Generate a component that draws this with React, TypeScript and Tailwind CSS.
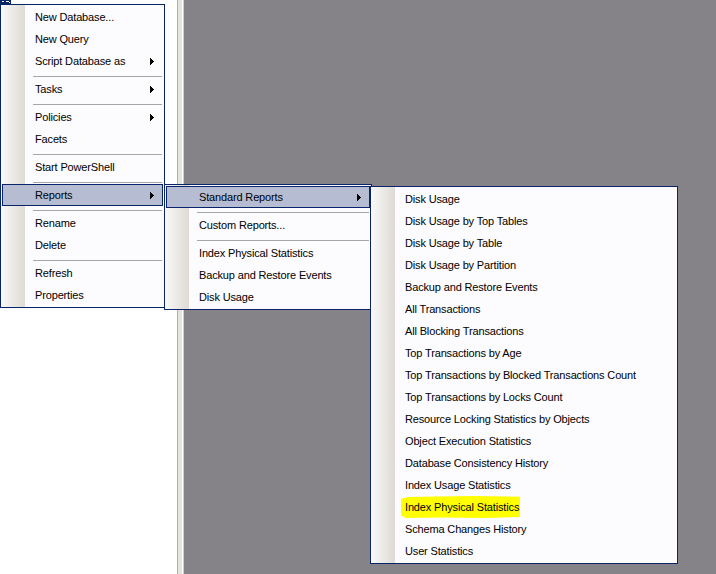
import React from "react";

type Entry =
  | { sep: true }
  | { label: string; arrow?: boolean; active?: boolean; marker?: boolean; sep?: false };

const Arrow = () => (
  <svg
    width="4"
    height="7"
    viewBox="0 0 4 7"
    shapeRendering="crispEdges"
    className="absolute right-[8px] top-[7px]"
  >
    <rect x="0" y="0" width="1" height="7" fill="#000" />
    <rect x="1" y="1" width="1" height="5" fill="#000" />
    <rect x="2" y="2" width="1" height="3" fill="#000" />
    <rect x="3" y="3" width="1" height="1" fill="#000" />
  </svg>
);

function Menu({ entries, className }: { entries: Entry[]; className: string }) {
  return (
    <div
      className={`absolute flex flex-col border border-[#0a246a] p-px bg-[linear-gradient(to_right,#f9f9f9,#dedad4_24px,#fcfbfe_24px)] ${className}`}
    >
      {entries.map((e, i) =>
        e.sep ? (
          <div key={i} className="h-[6px] pl-[31px] pr-px pt-[4px]">
            <div className="h-px bg-[#a8a7a6]" />
          </div>
        ) : (
          <div
            key={i}
            className={`relative flex h-[22px] items-center border pl-[32px] ${
              e.active ? "border-[#0a246a] bg-[#b6bdd2]" : "border-transparent"
            }`}
          >
            {e.marker ? (
              <span className="-ml-[4px] flex h-[22px] items-center bg-[#ffff00] pl-[4px] pr-px [clip-path:polygon(0_12%,6%_4%,30%_2%,60%_0,100%_3%,100%_95%,70%_100%,35%_98%,4%_100%,0_88%)]">
                {e.label}
              </span>
            ) : (
              <span>{e.label}</span>
            )}
            {e.arrow && <Arrow />}
          </div>
        )
      )}
    </div>
  );
}

const menu1: Entry[] = [
  { label: "New Database..." },
  { label: "New Query" },
  { label: "Script Database as", arrow: true },
  { sep: true },
  { label: "Tasks", arrow: true },
  { sep: true },
  { label: "Policies", arrow: true },
  { label: "Facets" },
  { sep: true },
  { label: "Start PowerShell" },
  { sep: true },
  { label: "Reports", arrow: true, active: true },
  { sep: true },
  { label: "Rename" },
  { label: "Delete" },
  { sep: true },
  { label: "Refresh" },
  { label: "Properties" },
];

const menu2: Entry[] = [
  { label: "Standard Reports", arrow: true, active: true },
  { sep: true },
  { label: "Custom Reports..." },
  { sep: true },
  { label: "Index Physical Statistics" },
  { label: "Backup and Restore Events" },
  { label: "Disk Usage" },
];

const menu3: Entry[] = [
  { label: "Disk Usage" },
  { label: "Disk Usage by Top Tables" },
  { label: "Disk Usage by Table" },
  { label: "Disk Usage by Partition" },
  { label: "Backup and Restore Events" },
  { label: "All Transactions" },
  { label: "All Blocking Transactions" },
  { label: "Top Transactions by Age" },
  { label: "Top Transactions by Blocked Transactions Count" },
  { label: "Top Transactions by Locks Count" },
  { label: "Resource Locking Statistics by Objects" },
  { label: "Object Execution Statistics" },
  { label: "Database Consistency History" },
  { label: "Index Usage Statistics" },
  { label: "Index Physical Statistics", marker: true },
  { label: "Schema Changes History" },
  { label: "User Statistics" },
];

export default function App() {
  return (
    <div className="relative h-[574px] w-[716px] overflow-hidden font-['Liberation_Sans',Arial,sans-serif] text-[11px] tracking-[-0.15px] text-black">
      <div className="flex h-full">
        <div className="w-[177px] bg-white" />
        <div className="w-px bg-[#b0aeac]" />
        <div className="w-[4px] bg-[#e8e2de]" />
        <div className="w-px bg-white" />
        <div className="w-px bg-[#d2ceca]" />
        <div className="flex-1 bg-[#858388]" />
      </div>

      <svg
        width="11"
        height="5"
        viewBox="0 0 11 5"
        shapeRendering="crispEdges"
        className="absolute left-0 top-0"
      >
        <rect x="0" y="0" width="11" height="5" fill="#0a246a" />
        <rect x="2" y="1" width="2" height="1" fill="#ffffff" />
        <rect x="6" y="1" width="3" height="1" fill="#ffffff" />
        <rect x="9" y="2" width="1" height="1" fill="#ffffff" />
      </svg>

      <Menu entries={menu1} className="left-0 top-[4px] w-[165px]" />
      <Menu entries={menu2} className="left-[164px] top-[184px] w-[208px]" />
      <Menu entries={menu3} className="left-[370px] top-[186px] w-[308px]" />
    </div>
  );
}
